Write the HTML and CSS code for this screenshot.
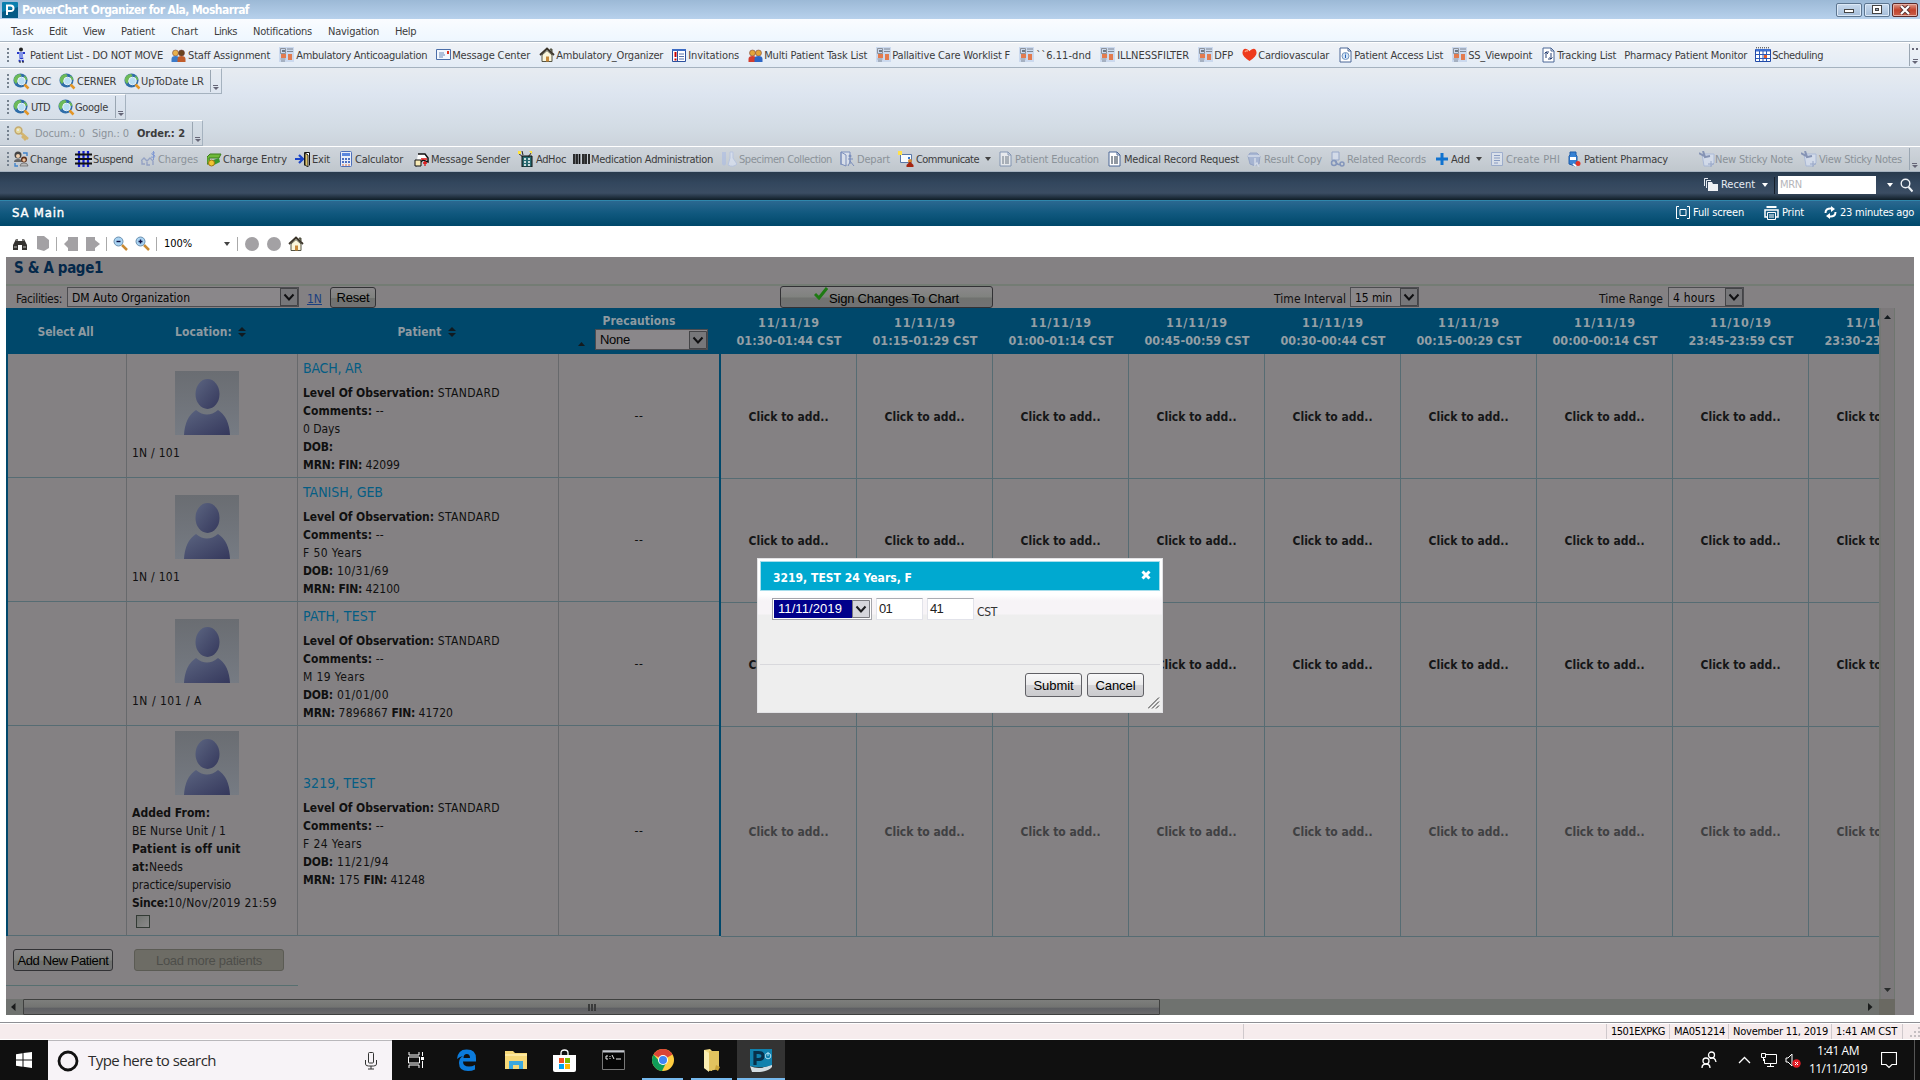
FILE: index.html
```html
<!DOCTYPE html>
<html lang="en">
<head>
<meta charset="utf-8">
<title>PowerChart Organizer</title>
<link rel="stylesheet" href="styles.css">
</head>
<body>
<header class="titlebar">
  <i data-icon="pc"></i><b data-w="227">PowerChart Organizer for Ala, Mosharraf</b>
  <div class="winbtns">
    <span class="winbtn"><svg width="12" height="10"><rect x="1.500" y="4.500" width="9" height="3" fill="#fff" stroke="#444"/></svg></span>
    <span class="winbtn"><svg width="12" height="11"><rect x="1.500" y="1.500" width="9" height="8" fill="#fff" stroke="#444"/><rect x="4.500" y="4.500" width="3" height="2" fill="#9ab" stroke="#444"/></svg></span>
    <span class="winbtn close"><svg width="12" height="10"><path d="M2 1l8 8M10 1l-8 8" stroke="#533" stroke-width="4"/><path d="M2 1l8 8M10 1l-8 8" stroke="#fff" stroke-width="2.200"/></svg></span>
  </div>
</header>
<nav class="menubar" id="menu"></nav>
<div class="toolbars">
  <div class="bar bar1" id="bar1"></div>
  <div class="bar short" id="bar2"></div>
  <div class="bar short" id="bar3"></div>
  <div class="bar short" id="bar4"></div>
  <div class="bar bar5" id="bar5"></div>
</div>
<div class="context">
  <i data-icon="recent"></i><span data-w="34">Recent</span><i class="caret light"></i><i class="vsep"></i>
  <div class="mrn"><span data-w="22">MRN</span></div><i class="caret light wide"></i><i data-icon="search"></i>
</div>
<div class="viewbar">
  <b data-w="53">SA Main</b>
  <span class="act"><i data-icon="full"></i><span data-w="51">Full screen</span></span>
  <span class="act print"><i data-icon="print"></i><span data-w="22">Print</span></span>
  <span class="act"><i data-icon="refresh"></i><span data-w="74">23 minutes ago</span></span>
</div>
<div class="browserbar" id="browserbar"></div>
<main class="page">
  <h1><span data-w="89">S &amp; A page1</span></h1>
  <div class="filters">
    <span class="lab fac" data-w="46">Facilities:</span>
    <div class="select s-fac"><span data-w="118">DM Auto Organization</span><i data-icon="drop"></i></div>
    <a data-w="15">1N</a>
    <button class="btn dim reset"><span data-w="33">Reset</span></button>
    <button class="btn dim sign"><i data-icon="check"></i><span data-w="130">Sign Changes To Chart</span></button>
    <span class="lab ti" data-w="72">Time Interval</span>
    <div class="select s-int"><span data-w="37">15 min</span><i data-icon="drop"></i></div>
    <span class="lab tr" data-w="64">Time Range</span>
    <div class="select s-rng"><span data-w="42">4 hours</span><i data-icon="drop"></i></div>
  </div>
  <div class="body">
    <section class="left">
      <div class="row head">
        <div><b data-w="56">Select All</b></div>
        <div><b data-w="57">Location:</b><i data-icon="sort"></i></div>
        <div class="h-pat"><b data-w="44">Patient</b><i data-icon="sort"></i></div>
        <div class="h-prec"><i data-icon="up"></i><b data-w="73">Precautions</b>
          <div class="select s-prec"><span data-w="30">None</span><i data-icon="drop"></i></div></div>
      </div>
      <div id="patients"></div>
      <div class="foot">
        <button class="btn dim add"><span data-w="91">Add New Patient</span></button>
        <button class="btn off"><span data-w="106">Load more patients</span></button>
      </div>
    </section>
    <section class="slots" id="slots"></section>
    <aside class="vscroll"><i data-icon="up"></i><i data-icon="down"></i></aside>
  </div>
  <div class="hscroll"><i data-icon="lt"></i><div class="thumb"><i></i><i></i><i></i></div><i data-icon="rt"></i><span class="corner"></span></div>
</main>
<footer class="status">
  <span class="grow"></span><span class="s2"></span>
  <span class="c1"><span data-w="54">1501EXPKG</span></span><span class="c2"><span data-w="51">MA051214</span></span><span class="c3"><span data-w="95">November 11, 2019</span></span><span class="c4"><span data-w="61">1:41 AM CST</span></span><span class="c5"><i data-icon="grip"></i></span>
</footer>
<div class="taskbar">
  <span class="tb start"><i data-icon="win"></i></span>
  <div class="find"><i data-icon="cortana"></i><span data-w="128">Type here to search</span><i data-icon="mic"></i></div>
  <span class="tb tv"><i data-icon="taskview"></i></span>
  <span class="tb"><i data-icon="edge"></i></span>
  <span class="tb"><i data-icon="explorer"></i></span>
  <span class="tb"><i data-icon="store"></i></span>
  <span class="tb"><i data-icon="cmd"></i></span>
  <span class="tb run"><i data-icon="chrome"></i></span>
  <span class="tb run"><i data-icon="folder"></i></span>
  <span class="tb active"><i data-icon="pcbig"></i></span>
  <div class="tray"><i data-icon="people"></i><i data-icon="chev"></i><i data-icon="net"></i><i data-icon="sound"></i>
    <div class="clock"><span data-w="42">1:41 AM</span><span data-w="58">11/11/2019</span></div><i data-icon="note"></i></div>
</div>
<div class="modal">
  <div class="mhead"><b data-w="139">3219, TEST 24 Years, F</b><svg width="10" height="10"><path d="M1.500 1.500l7 7M8.500 1.500l-7 7" stroke="#fff" stroke-width="3"/></svg></div>
  <div class="mbody">
    <div class="select lit"><span class="sel"><span data-w="64">11/11/2019</span></span><i data-icon="drop"></i></div>
    <div class="inp"><span data-w="13">01</span></div><div class="inp"><span data-w="13">41</span></div><span class="cst" data-w="20">CST</span>
  </div>
  <div class="mfoot"><button class="btn"><span data-w="40">Submit</span></button><button class="btn"><span data-w="40">Cancel</span></button></div>
  <svg class="resize" width="12" height="12"><path d="M0 11.500L11 .5M4 11.500L11 4.500M8 11.500L11 8.500" stroke="#333" fill="none"/></svg>
</div>
<script src="app.js"></script>
</body>
</html>
```
FILE: styles.css
```css
* { box-sizing: border-box; }
body { margin: 0; width: 1920px; height: 1080px; overflow: hidden; background: #fff; color: #3c3c3c; font: 11px/14px "DejaVu Sans Condensed", "DejaVu Sans", sans-serif; font-stretch: condensed; display: flex; flex-direction: column; position: relative; white-space: nowrap; }
svg { display: block; flex: none; }
i[data-icon] { flex: none; display: block; }
[data-w] { flex: none; white-space: pre; }
.titlebar { height: 19px; display: flex; align-items: center; background: linear-gradient(#9cb9d6, #b7d1ec); padding: 0 2px; color: #fff; font-size: 12px; flex: none; }
.titlebar b { margin-left: 4px; padding-top: 1px; }
.winbtns { margin-left: auto; display: flex; gap: 2px; }
.winbtn { width: 26px; height: 14px; border: 1px solid #5d7690; border-radius: 2px; background: linear-gradient(#c8daee, #a5bdd8); box-shadow: inset 0 0 0 1px #dce9f7; display: grid; place-items: center; }
.winbtn.close { background: linear-gradient(#dc9b8c, #c2432c 50%, #c9604a); border-color: #5a2a2a; box-shadow: inset 0 0 0 1px #e8b0a4; }
.menubar { height: 23px; background: linear-gradient(#fafcff, #eef7ff); border-bottom: 1px solid #a9b5c2; display: flex; align-items: center; flex: none; padding-top: 3px; }
.toolbars { height: 130px; background: linear-gradient(#eef2f6, #e6ebf1 22%, #dde5f0 40%, #d3dce5 65%, #c9d0d8 85%, #c2c9d0); display: flex; flex-direction: column; flex: none; }
.bar { display: flex; align-items: center; height: 26px; border-top: 1px solid #fff; border-bottom: 1px solid #a5b2bf; position: relative; flex: none; }
.bar1 { background: linear-gradient(#eff2f6, #e3ecf6); }
.bar5 { background: linear-gradient(#cfd5dc, #c0c7cd); }
.short { align-self: flex-start; border-right: 1px solid #a5b2bf; }
.bar::before { content: ""; position: absolute; left: 7px; top: 5px; width: 2px; height: 16px; background: repeating-linear-gradient(#76828f 0 2px, transparent 2px 4px); }
.item { display: flex; align-items: center; flex: none; }
.bar .item > [data-w] { padding-top: 1px; }
.item .ic { flex: none; }
.item.off { color: #8b9299; }
.item.off .ic { opacity: .55; }
.over { display: flex; flex-direction: column; justify-content: flex-end; align-items: center; height: 22px; width: 11px; border-left: 1px solid #9aa6b2; padding-bottom: 2px; }
.over::before { content: ""; width: 5px; height: 1px; background: #667; margin-bottom: 1px; }
.over::after { content: ""; border: 3px solid transparent; border-top: 3px solid #667; border-bottom: 0; }
.bar1 .over { background: radial-gradient(circle, #667 1px, transparent 1.500px) 1px 3px / 4px 4px repeat-x; }
.caret { border: 3px solid transparent; border-top: 4px solid #444; border-bottom: 0; flex: none; display: block; width: 6px; }
.caret.light { border-top-color: #fff; }
.context { height: 28px; background: linear-gradient(#283a4d, #33475e 40%, #3b4d63 75%, #101e28); display: flex; align-items: center; justify-content: flex-end; padding: 0 7px 2px 0; color: #e6ebf2; flex: none; }
.context .caret { margin-left: 7px; }
.context .vsep { width: 1px; height: 17px; background: #141e2a; margin: 0 3px 0 6px; }
.context > i:first-child { margin-right: 2px; }
.mrn { width: 98px; height: 18px; background: #fff; color: #b5b5ba; padding: 2px; }
.context .caret.wide { margin: 0 7px 0 11px; }
.viewbar { height: 26px; border-top: 1px solid #2f86ab; background: linear-gradient(#2b6891, #10587e 50%, #00486a); display: flex; align-items: center; color: #fff; padding: 0 6px 2px 12px; flex: none; }
.viewbar b { font-size: 13px; margin-right: auto; font-weight: normal; -webkit-text-stroke: .4px; }
.act { display: flex; align-items: center; gap: 3px; margin-left: 20px; }
.browserbar { height: 31px; display: flex; align-items: center; padding-top: 4px; flex: none; color: #000; }
.browserbar .sep { display: block; width: 1px; height: 14px; background: #aaa; }
.page { margin: 0 6px; height: 758px; background: #848183; flex: none; color: #101010; font-size: 12px; }
.page h1 { margin: 0; height: 29px; padding: 3px 8px; border-bottom: 2px solid #747c74; color: #04284a; font-size: 15px; line-height: 16px; }
.filters { height: 22px; display: flex; align-items: center; }
.filters .lab { padding-top: 3px; }
.fac { margin: 0 5px 0 10px; }
.filters a { color: #1a3f80; text-decoration: underline; margin-left: 8px; padding-top: 4px; }
.select { height: 20px; border: 1px solid #4c4c50; background: #8a878a; display: flex; align-items: center; justify-content: space-between; padding-left: 4px; flex: none; color: #050505; }
.filters .select span { padding-top: 2px; }
.s-fac { width: 232px; }
.s-int { width: 69px; margin-left: 4px; }
.s-rng { width: 76px; margin-left: 5px; }
.s-prec { width: 113px; height: 21px; font-family: "Liberation Sans", sans-serif; font-size: 13px; }
.btn { font: 13px "Liberation Sans", Arial, sans-serif; border: 1px solid #606065; border-radius: 3px; background: linear-gradient(#f8f8f9, #ebebec 50%, #d5d5d8 52%, #cbcbce); display: flex; justify-content: center; align-items: center; padding: 0; flex: none; color: #000; }
.dim { background: linear-gradient(#8a888a, #80827f 50%, #70726f 55%, #727274); border-color: #323235; }
.reset { width: 46px; height: 21px; margin-left: 8px; }
.sign { width: 213px; height: 22px; margin-left: 404px; }
.sign i { margin: -7px 1px 0 0; }
.sign span { padding-top: 2px; }
.ti { margin-left: 281px; }
.tr { margin-left: 180px; }
.body { display: flex; height: 691px; }
.left { width: 715px; flex: none; }
.row { display: grid; grid-template-columns: 119px 171px 261px 160px; border-left: 2px solid #00486b; border-right: 2px solid #00486b; width: 715px; }
.row > div { border-right: 1px solid #67696c; border-bottom: 1px solid #566c73; min-width: 0; }
.row > div:last-child { border-right: 0; }
.head { height: 46px; background: #00486b; color: #8e9aa1; }
.head > div { display: flex; align-items: center; justify-content: center; border: 0; gap: 6px; padding: 2px 4px 0 0; }
.head .h-prec { display: grid; grid-template-columns: 36px 113px 11px; gap: 0; align-content: start; justify-content: start; padding: 6px 0 0; }
.h-prec > i { grid-row: 2; grid-column: 1; padding: 7px 0 0 19px; }
.h-prec > b { grid-column: 1 / -1; grid-row: 1; justify-self: center; height: 15px; }
.h-prec .select { grid-column: 2; grid-row: 2; }
.prow { height: 124px; line-height: 18px; }
.prow.tall { height: 210px; }
.loc { padding: 17px 0 0 5px; }
.tall .loc { padding-top: 5px; }
.loc > svg { margin: 0 auto 9px 43px; }
.box { width: 14px; height: 13px; border: 1px solid #333b35; background: linear-gradient(135deg, #70736f, #8b8a8b); margin: 3px 0 0 4px; }
.pat { padding: 5px 0 0 5px; }
.tall .pat { padding-top: 48px; }
.name { color: #045d84; font-size: 14px; margin-bottom: 7px; }
.line { display: flex; white-space: pre; }
.prec { display: flex; align-items: center; justify-content: center; }
.foot { height: 50px; width: 292px; border-bottom: 1px solid #576f70; display: flex; padding: 13px 0 0 7px; gap: 21px; }
.foot .btn { height: 22px; width: 100px; }
.foot .off { width: 150px; background: #6d6c65; border-color: #5b5b54; color: #4d4e4a; }
.slots { width: 1158px; height: 691px; overflow: hidden; display: grid; grid-template-columns: repeat(9, 136px); grid-template-rows: 46px 125px 124px 124px 210px; flex: none; font-weight: bold; align-content: start; }
.slots > div { display: flex; flex-direction: column; align-items: center; justify-content: center; border-right: 1px solid #566c73; border-bottom: 1px solid #566c73; line-height: 18px; width: 136px; color: #151617; padding-top: 1px; }
.slots > .time { background: #00486b; border: 0; color: #949fa5; padding-top: 2px; font-size: 12.500px; }
.slots > .faded { color: #3f4042; }
.vscroll { width: 16px; background: #7c797b; border-left: 2px solid #747773; border-right: 1px solid #6f766f; display: flex; flex-direction: column; justify-content: space-between; align-items: center; padding: 6px 0; }
.hscroll { height: 16px; display: flex; align-items: center; background: #6f726f; width: 1889px; }
.hscroll > i:first-child { width: 17px; padding-left: 5px; }
.thumb { width: 1137px; height: 16px; border: 1px solid #3f403f; border-radius: 1px; background: linear-gradient(#7d7e7c, #737472 50%, #5e5f63 60%, #6b6b6c); display: flex; gap: 1px; justify-content: center; align-items: center; }
.thumb i { width: 2px; height: 7px; background: #3a3b3b; }
.hscroll > i:nth-child(3) { margin-left: auto; padding-right: 6px; }
.corner { width: 16px; height: 16px; background: #6a6962; }
.status { margin-top: 7px; height: 18px; border-top: 1px solid #8e8f94; box-shadow: inset 0 1px #fff; background: #f6eced; display: flex; align-items: center; color: #000; flex: none; border-bottom: 1px solid #fff; }
.status > span { height: 15px; border-left: 1px solid #cfc9cc; padding: 1px 0 0 4px; margin-top: 1px; }
.status .grow { width: 1243px; border: 0; }
.s2 { width: 363px; } .c1 { width: 63px; } .c2 { width: 59px; } .c3 { width: 103px; } .c4 { width: 71px; }
.status .c5 { padding: 3px 0 0 7px; }
.taskbar { height: 40px; background: #101010; display: flex; color: #fff; flex: none; font-family: "Open Sans", "Noto Sans", sans-serif; font-stretch: normal; }
.tb { width: 49px; height: 40px; display: grid; place-items: center; flex: none; }
.start { width: 48px; }
.find { width: 344px; background: #f7f3f7; border-top: 1px solid #b9b7bb; display: flex; align-items: center; color: #2b2b2b; font-size: 15px; padding: 0 15px 0 9px; }
.find span { margin: 0 auto 2px 9px; line-height: 20px; }
.tv { width: 50px; padding-right: 2px; }
.run { box-shadow: inset 0 -2px #76b9ed; width: 41px; margin: 0 4px; }
.run + .run { margin-right: 5px; }
.active { width: 48px; background: #333; box-shadow: inset 0 -2px #76b9ed; }
.tray { margin-left: auto; width: 214px; display: flex; align-items: center; border-right: 1px solid #555; margin-right: 5px; }
.tray i { margin-right: 8px; }
.tray i:first-child { margin-right: 21px; }
.tray i:nth-child(2) { margin-right: 10px; }
.clock { display: flex; flex-direction: column; align-items: center; width: 58px; font-size: 12px; line-height: 18px; margin-right: 14px; }
.modal { position: absolute; left: 757px; top: 558px; width: 406px; height: 155px; background: linear-gradient(#fff 0 36px, #f7f4f7 42px 55px, #eee 56px); border: 1px solid #e2e2e5; color: #333; padding: 2px; }
.mhead { height: 30px; background: #00a9d0; border: 1px solid #a6deec; color: #fff; font-size: 12px; display: flex; justify-content: space-between; align-items: center; padding: 3px 8px 0 12px; }
.mhead svg { margin-top: -5px; }
.mbody { display: flex; align-items: flex-start; height: 74px; border-bottom: 1px solid #d8d8dc; padding: 7px 0 0 12px; font: 13px "Liberation Sans", Arial, sans-serif; gap: 4px; }
.select.lit { width: 100px; height: 22px; border: 1px solid #a5a5ab; background: #fff; padding: 1px; }
.sel { background: #00008b; color: #fff; height: 18px; width: 78px; padding: 1px 4px; }
.lit i { filter: brightness(1.800); }
.inp { width: 47px; height: 22px; background: #fff; border: 1px solid #e2e3ea; border-top-color: #abadb3; padding: 2px; color: #222; }
.inp + .inp { margin-right: -1px; }
.cst { padding-top: 7px; font: 12px "DejaVu Sans Condensed", sans-serif; }
.mfoot { display: flex; justify-content: flex-end; gap: 5px; padding: 8px 16px; }
.mfoot .btn { width: 57px; height: 24px; }
.resize { position: absolute; right: 2px; bottom: 3px; }
```
FILE: app.js
```javascript
const svg = (w, h, body, vb) => `<svg width="${w}" height="${h}" viewBox="${vb || `0 0 ${w} ${h}`}" fill="none">${body}</svg>`;
const person = (x, c, h) => `<circle cx="${x}" cy="5" r="3" fill="${h}" stroke="#633" stroke-width=".5"/><path d="M${x - 4} 14v-3q0-3 4-3t4 3v3z" fill="${c}"/>`;
const news = '<path d="M0 0h15v15H0z" fill="#cbd9ee"/><path d="M1.500 1.500h5v5h-5zM1.500 12h5" stroke="#8c929b"/><path d="M8 2h6M8 4.500h6M2 14h4" stroke="#7f8794"/><path d="M2 7h5v4H2zM9 7h4v6H9z" fill="#e37b4e"/><path d="M3 3h3v2H3z" fill="#6e7783"/>';
const doc = b => '<path d="M2 1h8l3 3v11H2z" fill="#fff" stroke="#4a6796"/><path d="M10 1v3h3" stroke="#4a6796"/>' + b;
const house = '<path d="M1 8l7-6.500L15 8" stroke="#3a3328" stroke-width="1.800"/><path d="M3 8l5-4.500L13 8v6.500H3z" fill="#fbf6dc" stroke="#554"/><path d="M7 9.500h3v5H7z" fill="#c88a3a"/><path d="M11 2h2v3z" fill="#554" stroke="#554"/>';
const logo = '<rect width="16" height="16" rx="1" fill="#0b7fae"/><path d="M0 10L16 5v11H0z" fill="#065b86"/><path d="M5 13V3.500h3.500q3 0 3 2.800T8.500 9H5" stroke="#fff" stroke-width="2"/>';
const glass = s => `<path d="M9 9l5 5" stroke="#c98a34" stroke-width="2.500"/><circle cx="5.500" cy="5.500" r="4.500" fill="#a9d3f2" stroke="#6b8fae"/><path d="${s}" stroke="#114" stroke-width="1.400"/>`;
const pic = {
  pc: svg(16, 16, logo), pcbig: svg(24, 24, '<path d="M1 18q10 5 22-2v3q-5 6-20 5z" fill="#d5dde2"/><path d="M1 1h22v16q-10 4-22 1z" fill="#1181ad"/><path d="M6 17V4.500h3.500q4.500 0 4.500 3.500T9.500 11.500H6" stroke="#082f49" stroke-width="3.200"/><circle cx="19" cy="8" r="2.800" stroke="#a8dcf0"/><path d="M19 4v4" stroke="#a8dcf0"/>'),
  walk: svg(14, 16, '<circle cx="7" cy="2.500" r="2" fill="#222"/><path d="M3 6h8M7 5v6M7 10l-2 5M8 10l1 5" stroke="#2637c8" stroke-width="2" stroke-dasharray="2 1"/><path d="M5 5h4v6H5z" fill="#8193e8"/><path d="M5 15h2M8 15h2" stroke="#111"/>'),
  staff: svg(15, 15, person(4.5, '#3b7ac8', '#e8b04b') + person(10.5, '#c05d2c', '#6b4420')), multi: svg(15, 15, person(4.5, '#d33d2f', '#e3a53a') + person(10.5, '#2d66c5', '#e3a53a')), news: svg(16, 16, news),
  mail: svg(16, 16, '<path d="M.5 2.500h14v10H.5z" fill="#f4f8fe" stroke="#4b6ea9"/><path d="M3 6h5M3 8h6M3 10h4" stroke="#6b88b7"/><path d="M11 4h2v3h-2z" fill="#d32"/>'), house: svg(16, 16, house),
  invite: svg(15, 15, '<path d="M.5 1.500h13v12H.5z" fill="#fff" stroke="#2b4f9d"/><path d="M0 1h14v2H0z" fill="#3c6bc4"/><path d="M3.500 4v5M3.500 10.500v2" stroke="#c00" stroke-width="2"/><path d="M7 6h5M7 8.500h5M7 11h5" stroke="#5671a9"/><path d="M5.500 3v11" stroke="#2b4f9d"/>'),
  heart: svg(15, 14, '<path d="M7.500 13Q0 8 .5 4.500 1-.3 5 1.200q2 .8 2.500 2Q8 2 10 1.200 14-.3 14.500 4.500 15 8 7.500 13z" fill="#ee3a1c"/><path d="M3 4q1-2 3-1" stroke="#ff9d78" stroke-width="1.500"/>'),
  docinfo: svg(15, 16, doc('<circle cx="7.500" cy="9" r="3.500" fill="#d5e6f8" stroke="#7596be"/><path d="M7.500 8v3M7.500 6.500v1" stroke="#2563b8"/>')), doctrack: svg(15, 16, doc('<path d="M5 11V5h3M3.500 6.500L5 5l2 2M10 6v6H7M8.500 10.500L10 12l1.500-1.500" stroke="#2a4374"/>')),
  docs: svg(15, 16, doc('<path d="M4 6h2M7 6h4M4 8h2M7 8h4M4 10h2M7 10h4M4 12h2M7 12h4" stroke="#234"/>')),
  cal: svg(16, 16, '<path d="M.5 2.500h15v12H.5z" fill="#fff" stroke="#1f49a8"/><path d="M1 2h14v2.500H1z" fill="#3e6fd0"/><path d="M1 7.500h14M1 11.500h14M4.500 4v10M8 4v10M11.500 4v10" stroke="#2c59b7"/><path d="M9 8h3v3H9z" fill="#e75b28"/><path d="M1 .8h14" stroke="#333" stroke-dasharray="1 1"/>'),
  globe: svg(17, 17, '<circle cx="7.500" cy="7.500" r="7" fill="#2f6da9"/><path d="M1.500 4q4-5 7-2L6 7l-3 4Q-.5 8 1.500 4zM11 2.500q3 1 3.500 4l-3 1z" fill="#6dba58"/><circle cx="8.500" cy="8" r="3.800" fill="#b9def3" stroke="#e8f3fa"/><path d="M11.500 11.500l4 4" stroke="#e39526" stroke-width="2.500"/>'),
  key: svg(15, 15, '<path d="M6 6l8 7M10 10l-2 2M12 12l-2 2" stroke="#d79a14" stroke-width="2.600"/><circle cx="4.500" cy="4.500" r="3.400" fill="#f7da67" stroke="#b98210" stroke-width="1.500"/><circle cx="4" cy="4" r="1" fill="#fff"/>'),
  change: svg(16, 16, '<circle cx="5" cy="4" r="3.500" fill="#444"/><circle cx="5" cy="5" r="2" fill="#f0d0b0"/><path d="M1 11q0-3 4-3t4 3z" fill="#666"/><circle cx="11" cy="8.500" r="3" fill="#5c2f1b"/><circle cx="11" cy="9" r="1.700" fill="#edc49d"/><path d="M7 15q0-3 4-3t4 3z" fill="#bbb" stroke="#555" stroke-width=".6"/><path d="M10 2h4v3M2 12v3h3" stroke="#4084cc" stroke-width="1.400"/>'),
  grid: svg(17, 16, '<path d="M4 0v16M8.500 0v16M13 0v16" stroke="#1721d2" stroke-width="2.200"/><path d="M0 3.500h17M0 8h17M0 12.500h17" stroke="#111" stroke-width="1.800"/>'),
  charges: svg(16, 16, '<path d="M0 10l3-3 3 3 3-3 3 3v4M1 10v3h3M6 11v3h3" stroke="#6d80b8" stroke-width="1.400"/><path d="M14 2q-4-1-3 1.500 3 0 3 2 0 1.500-4 .5M12.500 0v9" stroke="#476ed0"/>'),
  entry: svg(15, 15, '<path d="M0 5l3-3h11l-2 4H2l1 6H0z" fill="#6fba39" stroke="#3d7d1d"/><path d="M3 9l9-3 1 4-8 4z" fill="#38982e"/><circle cx="4.500" cy="11" r="3" fill="#f1c431" stroke="#9d7617"/>'),
  exit: svg(16, 16, '<path d="M0 8h7M4 4l4 4-4 4" stroke="#1b45c8" stroke-width="2.200"/><path d="M9.500 14.500V1.500h5v13" stroke="#111" fill="#fff"/><path d="M10 2l3 2v12l-3-2z" fill="#e1c66c" stroke="#222"/>'),
  calc: svg(14, 16, '<rect x="1.500" y=".5" width="11" height="15" rx="1" fill="#e8edf8" stroke="#4d6fba"/><path d="M3 2h8v3H3z" fill="#5a86de"/><path d="M3 8h8M3 11h8" stroke="#4d70c2" stroke-width="2" stroke-dasharray="2 1"/><path d="M3 14h8" stroke="#d56b42" stroke-dasharray="2 1"/>'),
  sender: svg(16, 16, '<path d="M4 3h7l3 4v4l-5-2-7 6" fill="#fff" stroke="#111" stroke-width="1.500"/><path d="M1 9h6v6H1z" fill="#f7eab5" stroke="#111"/><path d="M7 8h6M9 12h4M11 10v5" stroke="#d11" stroke-width="1.300"/>'),
  adhoc: svg(16, 16, '<path d="M4 5h10v11H4z" fill="#286a70" stroke="#111"/><path d="M6 8h2M10 8h2M6 11h2M10 11h2M6 14h2M10 14h2" stroke="#fff" stroke-width="1.500"/><path d="M0 2l5 4M4 0l1 4M14 1l-4 5" stroke="#222"/><path d="M0 0h3v3H0zM11 0h3v3z" fill="#ffe43b"/>'),
  barcode: svg(17, 10, '<path d="M1 0v10M4 0v10M6.500 0v10M10 0v10M13 0v10M16 0v10" stroke="#111" stroke-width="1.700"/><path d="M2.800 0v10M11.500 0v10" stroke="#111" stroke-width=".7"/>'),
  flask: svg(16, 16, '<path d="M1 1h4v12q-2 3-4 0z" fill="#a9bbe5"/><path d="M9 1h3v6l4 6q-4 4-9 1l2-7z" fill="#dfe8fb" stroke="#a9bbe5"/>'),
  depart: svg(16, 16, '<path d="M1 14V1h9v12M1 1l5 3v11l-5-2z" fill="#e6ecfb" stroke="#3d5aa7"/><circle cx="10" cy="5" r="1.500" fill="#3d5aa7"/><path d="M10 7v4l-2 4M10 10l4 5M8 8h5" stroke="#3d5aa7"/>'),
  comm: svg(16, 16, '<path d="M2.500 3.500h11v8h-11z" fill="#f7fbff" stroke="#5978a8"/><path d="M10 6h2v2h-2z" fill="#37c"/><path d="M0 0h4v4H0z" fill="#ffe14c"/><circle cx="12" cy="10" r="2" fill="#d9882e"/><path d="M8.500 16v-2l3-3h1l3 3v2z" fill="#a42410"/>'),
  cup: svg(16, 16, '<path d="M2 5l2-3h7l3 3-1 8q-5 3-9 0z" fill="#8ca1d1" stroke="#6d83b8"/><path d="M2 5h12M9 7v7l2-2 2 4" stroke="#dce5f9" stroke-width="1.500"/>'),
  chain: svg(16, 16, '<path d="M2 1h7v8H2z" fill="#dbe4f7" stroke="#6f86bc"/><circle cx="4" cy="12" r="2.500" stroke="#4f6ba9" stroke-width="1.500"/><circle cx="12" cy="13" r="2" stroke="#4f6ba9" stroke-width="1.500"/><path d="M5 10q3 5 6 3" stroke="#4f6ba9" stroke-width="1.500"/>'),
  plus: svg(12, 12, '<path d="M6 0v12M0 6h12" stroke="#1173cf" stroke-width="3"/>'), lines: svg(14, 15, '<path d="M.5.5h11v13H.5z" fill="#e8effc" stroke="#7c94c6"/><path d="M3 3.500h6M3 6h6M3 8.500h6M3 11h4" stroke="#5975b4"/>'),
  pills: svg(14, 16, '<path d="M2 1h6v3l1 1v8l-2 2-6-2V5l1-1z" fill="#3581d4" stroke="#1f5ca8"/><path d="M2 6h6v3H2z" fill="#fff"/><circle cx="10" cy="12.500" r="2.500" fill="#e33527"/><path d="M5 13l3 2" stroke="#fff" stroke-width="2"/>'),
  sticky: svg(16, 16, '<path d="M3 3h12v9l-3 3H5z" fill="#dbe5fb" stroke="#94a9d8"/><path d="M0 2l5 3M4 0l2 6 5-1" stroke="#4e6399" stroke-width="2"/><path d="M12 10v6M9 13h6" stroke="#7186bd"/>'),
  recent: svg(15, 14, '<path d="M.5 8V.5H4M2.500 10V2.500H7" stroke="#e6ebf2"/><path d="M4 4h4l1 2h5v7H4z" fill="#eef1f5"/>'), search: svg(13, 15, '<circle cx="5.500" cy="5.500" r="4.300" stroke="#eef2f6" stroke-width="1.400"/><path d="M8.500 9l4 4.500" stroke="#eef2f6" stroke-width="2"/>'),
  full: svg(14, 13, '<path d="M3 .5H.5v12H3M11 .5h2.500v12H11M4 3.500h6v6H4z" stroke="#fff"/>'), print: svg(15, 14, '<path d="M2.500 1h10" stroke="#fff" stroke-width="2"/><path d="M3 11H1V4h13v7h-2" stroke="#fff" stroke-width="1.500"/><path d="M3.500 6.500h8v7h-8zM5 9h5M5 11h5" stroke="#fff"/>'),
  refresh: svg(13, 13, '<path d="M1.500 7q0-5 6-4.500M11.500 6q0 5-6 4.500" stroke="#fff" stroke-width="2"/><path d="M7 0l4 3-4 3zM6 7l-4 3 4 3z" fill="#fff"/>'),
  bino: svg(16, 14, '<path d="M1 13V8l3-6h2v11zM10 13V2h2l3 6v5zM6 4h4v4H6z" fill="#34322f"/><path d="M2 10h3M11 10h3M4 3h2M10 3h2" stroke="#bbb"/>'),
  gpage: svg(12, 15, '<path d="M0 0h7l5 4v8l-5 3-7-2z" fill="#a3a1a4"/>'), gleft: svg(14, 14, '<path d="M4 0h10v14H4v-3L0 7l4-4z" fill="#a3a1a4"/>'), gright: svg(14, 14, '<path d="M0 0h9v3l5 4-5 4v3H0z" fill="#a3a1a4"/>'), dot: svg(14, 14, '<circle cx="7" cy="7" r="7" fill="#a3a1a4"/>'),
  zout: svg(15, 15, glass('M3.500 5.500h4')), zin: svg(15, 15, glass('M3.500 5.500h4M5.500 3.500v4')),
  drop: svg(18, 18, '<path d="M.5 0v18M.5.5h17v17H.5z" stroke="#444447" fill="#77777a"/><path d="M4.500 6.500L9 11.500l4.500-5" stroke="#101012" stroke-width="2"/>'),
  check: svg(14, 13, '<path d="M1 7l4 4 8-10" stroke="#1e7a13" stroke-width="3"/>'), sort: svg(8, 10, '<path d="M0 4l4-4 4 4zM0 6h8l-4 4z" fill="#101a20"/>'),
  up: svg(7, 5, '<path d="M0 5l3.500-4L7 5z" fill="#141a1e"/>'), down: svg(7, 5, '<path d="M0 0l3.500 4L7 0z" fill="#292c2c"/>'), lt: svg(5, 8, '<path d="M4.500 0v8L0 4z" fill="#1a1c1c"/>'), rt: svg(5, 8, '<path d="M0 0v8l4.500-4z" fill="#1a1c1c"/>'),
  grip: svg(10, 10, '<path d="M8 0h2v2H8zM4 4h2v2H4zM8 4h2v2H8zM0 8h2v2H0zM4 8h2v2H4zM8 8h2v2H8z" fill="#c5bfc2"/>'),
  win: svg(16, 16, '<path d="M0 2.200L6.500 1.300v6.200H0zM7.500 1.100L16 0v7.500H7.500zM0 8.500h6.500v6.200L0 13.800zM7.500 8.500H16V16l-8.500-1.200z" fill="#fff"/>'), cortana: svg(22, 22, '<circle cx="11" cy="11" r="9" stroke="#111" stroke-width="2.800"/>'),
  mic: svg(12, 18, '<rect x="3.500" y=".5" width="5" height="10.500" rx="1" stroke="#333"/><path d="M.5 8v4q0 2 3 2h5q3 0 3-2V8M6 14v3M3 17h6" stroke="#333"/>'),
  taskview: svg(17, 16, '<path d="M1 0v3h10V0M1 16v-3h10v3M.500 5h11v6H.500zM14.500 0v4M14.500 9v7" stroke="#fff"/><path d="M13 5h3v3h-3z" fill="#fff"/>'),
  edge: svg(21, 22, '<path d="M1 10Q2 0 11 .500q9 0 9 9v3H7q0 5 6 5 3 0 6-1.500v4.500q-3 1.500-7 1.500-9 0-9-8 0-5 4-7-3 .5-6 3zM7.500 9H14q0-4-3.200-4T7.500 9z" fill="#0b7bdc" fill-rule="evenodd"/>'),
  explorer: svg(22, 20, '<path d="M0 1h8l2 2h12v16H0z" fill="#f6d878"/><path d="M0 4h22v2H0z" fill="#fde9a1"/><path d="M4 11h14v8h-4v-4H8v4H4z" fill="#3ba8df"/>'),
  store: svg(23, 23, '<path d="M0 6h23v15q0 2-2 2H2q-2 0-2-2z" fill="#fff"/><path d="M8 8V4q0-3 3.500-3T15 4v4" stroke="#fff" stroke-width="1.300"/><path d="M6 9h5v5H6z" fill="#f25022"/><path d="M12 9h5v5h-5z" fill="#7fba00"/><path d="M6 15h5v5H6z" fill="#00a4ef"/><path d="M12 15h5v5h-5z" fill="#ffb900"/>'),
  cmd: svg(23, 20, '<path d="M.5.5h22v19H.5z" fill="#050505" stroke="#777"/><path d="M1 1.500h21" stroke="#c3c7ce" stroke-width="2"/><path d="M6 6H4v3h2M8 6v1M8 8v1M10 5l2 4M14 9h5" stroke="#eee"/>'),
  chrome: svg(22, 22, '<circle cx="11" cy="11" r="11" fill="#ffcd40"/><path d="M11 11L1.500 5.500a11 11 0 0 1 19 0z" fill="#db4437"/><path d="M1.500 5.500a11 11 0 0 0 8.500 16.500L14 14l-6-1z" fill="#0f9d58"/><circle cx="11" cy="11" r="5" fill="#fff"/><circle cx="11" cy="11" r="4" fill="#4285f4"/>'),
  folder: svg(20, 23, '<path d="M2 1l6-1 2 2v20l-8-3z" fill="#f3db83"/><path d="M7 2h10v18l-10 2z" fill="#e2c35f"/><path d="M2 1l5 3v19l-5-4z" fill="#fbeeb2"/><path d="M14 16l4 2-2 4-3-2z" fill="#cba43a"/>'),
  people: svg(16, 18, '<circle cx="10.500" cy="4" r="3" stroke="#fff" stroke-width="1.300"/><circle cx="5" cy="10" r="3" stroke="#fff" stroke-width="1.300"/><path d="M1 17q0-4 4-4t4 4M9 7.500q5-2 6 3.500" stroke="#fff" stroke-width="1.300"/>'), chev: svg(13, 8, '<path d="M1 7l5.500-5.500L12 7" stroke="#fff" stroke-width="1.300"/>'),
  net: svg(16, 14, '<path d="M4 1.500h11.500v9H3.500V6M9.500 11v2.500M6 13.500h7M.500.500h4v4h-4zM2.500 5v3" stroke="#fff"/>'), sound: svg(16, 15, '<path d="M1 5h2l4-4v12L3 9H1z" stroke="#fff"/><circle cx="11.500" cy="10.500" r="4.200" fill="#e11b25"/><path d="M10 9l3 3M13 9l-3 3" stroke="#fff"/>'), note: svg(16, 17, '<path d="M.5.5h15v12H11l-3 3-3-3H.5z" stroke="#fff" stroke-width="1.200"/>'),
  avatar: svg(64, 64, '<defs><linearGradient id="bg" x2="0" y2="1"><stop stop-color="#6a6d72"/><stop offset="1" stop-color="#767b83"/></linearGradient><linearGradient id="sk" x2="1" y2="1"><stop stop-color="#5b6480"/><stop offset="1" stop-color="#35385c"/></linearGradient></defs><path d="M0 0h64v64H0z" fill="url(#bg)"/><ellipse cx="32.500" cy="23" rx="12" ry="15" fill="url(#sk)"/><path d="M9 64q1-18 12-25 11 9 22 0 11 7 12 25z" fill="url(#sk)"/>')
};
const $ = s => document.querySelector(s);
const lab = (t, w) => `<span data-w="${w}">${t}</span>`;

// Each entry: [icon, start, text start, text end, label, flags]
function fill(id, list, end, over) {
  let x = 0, out = '';
  for (const [icon, a, t, b, text, flag = ''] of list) {
    const inner = flag.includes('b') ? `<b data-w="${b - t}">${text}</b>` : lab(text, b - t);
    out += `<div class="item${flag.includes('o') ? ' off' : ''}" style="margin-left:${a - x}px"><span class="ic" style="width:${t - a}px">${icon ? pic[icon] : ''}</span>${inner}${flag.includes('c') ? '<i class="caret" style="margin-left:6px"></i>' : ''}</div>`;
    x = b + (flag.includes('c') ? 12 : 0);
  }
  if (over) out += `<span class="over" style="margin-left:${over - x}px"></span>`;
  $(id).innerHTML = out;
  if (end) $(id).style.width = end + 'px';
}
fill('#menu', [['Task', 11, 34], ['Edit', 49, 67], ['View', 83, 105], ['Patient', 121, 155], ['Chart', 171, 198], ['Links', 214, 237], ['Notifications', 253, 312], ['Navigation', 328, 379], ['Help', 395, 416]].map(m => ['', m[1], m[1], m[2], m[0]]));
fill('#bar1', [['walk', 14, 30, 163, 'Patient List - DO NOT MOVE'], ['staff', 171, 188, 270, 'Staff Assignment'], ['news', 279, 296, 427, 'Ambulatory Anticoagulation'], ['mail', 436, 452, 530, 'Message Center'], ['house', 539, 556, 663, 'Ambulatory_Organizer'], ['invite', 672, 688, 739, 'Invitations'], ['multi', 748, 764, 867, 'Multi Patient Task List'], ['news', 876, 892, 1010, 'Pallaitive Care Worklist F'], ['news', 1019, 1036, 1091, '``6.11-dnd'], ['news', 1100, 1117, 1189, 'ILLNESSFILTER'], ['news', 1198, 1214, 1233, 'DFP'], ['heart', 1242, 1258, 1329, 'Cardiovascular'], ['docinfo', 1338, 1354, 1443, 'Patient Access List'], ['news', 1452, 1468, 1532, 'SS_Viewpoint'], ['doctrack', 1541, 1557, 1616, 'Tracking List'], ['', 1624, 1624, 1747, 'Pharmacy Patient Monitor'], ['cal', 1755, 1772, 1823, 'Scheduling']], 1920, 1909);
fill('#bar2', [['globe', 13, 31, 51, 'CDC'], ['globe', 59, 77, 116, 'CERNER'], ['globe', 124, 141, 204, 'UpToDate LR']], 222, 210);
fill('#bar3', [['globe', 13, 31, 50, 'UTD'], ['globe', 58, 75, 108, 'Google']], 126, 115);
fill('#bar4', [['key', 14, 35, 85, 'Docum.: 0', 'o'], ['', 92, 92, 129, 'Sign.: 0', 'o'], ['', 137, 137, 185, 'Order.: 2', 'b']], 203, 192);
fill('#bar5', [['change', 13, 30, 67, 'Change'], ['grid', 75, 93, 133, 'Suspend'], ['charges', 141, 158, 198, 'Charges', 'o'], ['entry', 207, 223, 287, 'Charge Entry'], ['exit', 295, 312, 330, 'Exit'], ['calc', 339, 355, 403, 'Calculator'], ['sender', 414, 431, 510, 'Message Sender'], ['adhoc', 518, 536, 566, 'AdHoc'], ['barcode', 573, 591, 713, 'Medication Administration'], ['flask', 721, 739, 832, 'Specimen Collection', 'o'], ['depart', 840, 857, 890, 'Depart', 'o'], ['comm', 898, 916, 979, 'Communicate', 'c'], ['docs', 998, 1015, 1099, 'Patient Education', 'o'], ['docs', 1107, 1124, 1239, 'Medical Record Request'], ['cup', 1246, 1264, 1322, 'Result Copy', 'o'], ['chain', 1330, 1347, 1426, 'Related Records', 'o'], ['plus', 1436, 1451, 1470, 'Add', 'c'], ['lines', 1491, 1506, 1560, 'Create PHI', 'o'], ['pills', 1568, 1584, 1668, 'Patient Pharmacy'], ['sticky', 1699, 1715, 1793, 'New Sticky Note', 'o'], ['sticky', 1801, 1819, 1902, 'View Sticky Notes', 'o']], 1920, 1909);

// Viewer toolbar: [icon or "|" separator, left edge, width]
let bx = 0;
$('#browserbar').innerHTML = [['bino', 12, 16], ['gpage', 37, 12], ['|', 56, 1], ['gleft', 64, 14], ['gright', 86, 14], ['|', 106, 1], ['zout', 113, 15], ['zin', 135, 15], ['|', 156, 1], ['t', 164, 28], ['v', 224, 6], ['|', 237, 1], ['dot', 245, 14], ['dot', 267, 14], ['house', 288, 16]].map(([k, x, w]) => {
  const m = x - bx; bx = x + w;
  const c = k === '|' ? '<i class="sep"></i>' : k === 't' ? lab('100%', 28) : k === 'v' ? '<i class="caret"></i>' : pic[k];
  return `<div style="margin-left:${m}px;width:${w}px">${c}</div>`;
}).join('');

const bold = (t, w) => `<b data-w="${w}">${t}</b>`;
const patients = [
  { name: 'BACH, AR', nw: 59, age: '0 Days', aw: 37, dob: '', mrn: '', fin: '42099', loc: '1N / 101', lw: 48 },
  { name: 'TANISH, GEB', nw: 80, age: 'F 50 Years', aw: 59, dob: '10/31/69', mrn: '', fin: '42100', loc: '1N / 101', lw: 48 },
  { name: 'PATH, TEST', nw: 73, age: 'M 19 Years', aw: 62, dob: '01/01/00', mrn: '7896867', mw: 49, fin: '41720', loc: '1N / 101 / A', lw: 70 },
  { name: '3219, TEST', nw: 72, age: 'F 24 Years', aw: 59, dob: '11/21/94', mrn: '175', mw: 21, fin: '41248', tall: 1 }
];
$('#patients').innerHTML = patients.map(p => `<div class="row prow${p.tall ? ' tall' : ''}"><div></div><div class="loc">${pic.avatar}${p.tall
  ? `<div class="line">${bold('Added From:', 78)}</div><div class="line">${lab('BE Nurse Unit / 1', 94)}</div><div class="line">${bold('Patient is off unit', 108)}</div><div class="line">${bold('at:', 17)}${lab('Needs', 34)}</div><div class="line">${lab('practice/supervisio', 99)}</div><div class="line">${bold('Since:', 36)}${lab('10/Nov/2019 21:59', 109)}</div><div class="box"></div>`
  : `<div class="line">${lab(p.loc, p.lw)}</div>`}</div>
  <div class="pat"><div class="line name">${lab(p.name, p.nw)}</div><div class="line">${bold('Level Of Observation:', 131)}${lab(' STANDARD', 66)}</div><div class="line">${bold('Comments:', 69)}${lab(' --', 12)}</div><div class="line">${lab(p.age, p.aw)}</div><div class="line">${bold('DOB:', 30)}${p.dob ? lab(' ' + p.dob, 56) : ''}</div><div class="line">${bold('MRN:', 32)}${p.mrn ? lab(' ' + p.mrn, p.mw + 4) : ''}${bold(' FIN:', 27)}${lab(' ' + p.fin, 38)}</div></div>
  <div class="prec">${lab('--', 9)}</div></div>`).join('');

const times = ['01:30-01:44', '01:15-01:29', '01:00-01:14', '00:45-00:59', '00:30-00:44', '00:15-00:29', '00:00-00:14', '23:45-23:59', '23:30-23:44'];
$('#slots').innerHTML = times.map((t, n) => `<div class="time">${lab(n < 7 ? '11/11/19' : '11/10/19', 62)}${lab(t + ' CST', 105)}</div>`).join('')
  + patients.map(p => times.map(() => `<div class="${p.tall ? 'faded' : ''}">${lab('Click to add..', 80)}</div>`).join('')).join('');

document.querySelectorAll('[data-icon]').forEach(e => { e.innerHTML = pic[e.dataset.icon]; });

// Track each label so that it fills its allotted width.
document.querySelectorAll('[data-w]').forEach(e => {
  const r = document.createRange();
  r.selectNodeContents(e);
  const n = e.textContent.length, w = +e.dataset.w;
  e.style.letterSpacing = ((w - r.getBoundingClientRect().width) / n).toFixed(3) + 'px';
});
```
